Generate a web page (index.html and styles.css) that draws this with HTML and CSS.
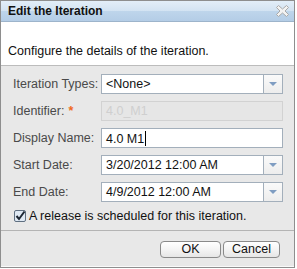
FILE: index.html
```html
<!DOCTYPE html>
<html lang="en">
<head>
  <meta charset="UTF-8">
  <title>Edit the Iteration</title>
  <link rel="stylesheet" href="styles.css">
</head>
<body>
<div class="dialog">
  <div class="titlebar">
    <span class="title">Edit the Iteration</span>
    <svg class="close" width="13" height="12" viewBox="0 0 13 12">
      <polygon points="0.5,2.5 2.5,0.5 6.5,4 10.5,0.5 12.5,2.5 9,6 12.5,9.5 10.5,11.5 6.5,8 2.5,11.5 0.5,9.5 4,6" fill="#f2f2f2" stroke="#a9a9a9" stroke-width="1"/>
    </svg>
  </div>

  <div class="intro">Configure the details of the iteration.</div>

  <div class="form">
    <label class="label">Iteration Types:</label>
    <div class="field combo">
      <span class="value">&lt;None&gt;</span>
      <span class="arrow"></span>
    </div>

    <label class="label">Identifier: <span class="req">*</span></label>
    <div class="field disabled">
      <span class="value">4.0_M1</span>
    </div>

    <label class="label">Display Name:</label>
    <div class="field">
      <span class="value">4.0 M1<span class="caret"></span></span>
    </div>

    <label class="label">Start Date:</label>
    <div class="field combo">
      <span class="value">3/20/2012 12:00 AM</span>
      <span class="arrow"></span>
    </div>

    <label class="label">End Date:</label>
    <div class="field combo">
      <span class="value">4/9/2012 12:00 AM</span>
      <span class="arrow"></span>
    </div>
  </div>

  <div class="check-row">
    <svg class="check" width="12" height="12" viewBox="0 0 12 12">
      <rect x="0.5" y="0.5" width="11" height="11" rx="1.5" fill="#dfe9f4" stroke="#5f6f80"/>
      <path d="M2.5 6 L5 9 L10.5 1.5" fill="none" stroke="#1b2633" stroke-width="2"/>
    </svg>
    <span>A release is scheduled for this iteration.</span>
  </div>

  <div class="footer">
    <button class="btn ok">OK</button>
    <button class="btn cancel">Cancel</button>
  </div>
</div>
</body>
</html>
```

FILE: styles.css
```css
* {
  margin: 0;
  padding: 0;
  box-sizing: border-box;
}

body {
  font-family: "Liberation Sans", Arial, sans-serif;
  font-size: 12px;
  color: #111;
  background: #fff;
}

.dialog {
  width: 295px;
  height: 268px;
  border: 1px solid #8e8e8e;
  background: #e8e8e8;
  display: flex;
  flex-direction: column;
}

.titlebar {
  height: 21px;
  display: flex;
  align-items: center;
  justify-content: space-between;
  padding: 0 5px 0 7px;
  background: linear-gradient(#e3eef8, #d3e3f2 50%, #bed5eb 52%, #b4cde6);
  border-bottom: 1px solid #9db4cb;
}

.title {
  font-weight: bold;
  font-size: 12px;
  color: #111;
}

.close {
  display: block;
}

.intro {
  height: 44px;
  background: #fff;
  border-bottom: 1px solid #bcbcbc;
  display: flex;
  align-items: flex-end;
  padding: 0 0 7px 7px;
  font-size: 12.5px;
}

.form {
  display: grid;
  grid-template-columns: 88px 182px;
  row-gap: 7px;
  padding: 8px 0 0 12px;
}

.label {
  display: flex;
  align-items: center;
  white-space: nowrap;
  color: #4a4a4a;
  font-size: 12.5px;
}

.req {
  color: #f06a1c;
  font-weight: bold;
  margin-left: 4px;
}

.field {
  height: 20px;
  display: flex;
  align-items: center;
  background: #fff;
  border: 1px solid #a3afbb;
  font-size: 12.5px;
}

.value {
  flex: 1;
  padding-left: 4px;
  white-space: nowrap;
}

.field.disabled {
  background: #e6e6e6;
  border-color: #d2d2d2;
  color: #cfcfcf;
}

.caret {
  display: inline-block;
  width: 1px;
  height: 15px;
  background: #000;
  vertical-align: -3px;
  margin-left: 1px;
}

.arrow {
  width: 19px;
  height: 100%;
  border-left: 1px solid #a3afbb;
  background: linear-gradient(#fafafa, #ededed);
  display: flex;
  align-items: center;
  justify-content: center;
}

.arrow::after {
  content: "";
  border-left: 4px solid transparent;
  border-right: 4px solid transparent;
  border-top: 4px solid #7f9dc2;
}

.check-row {
  display: flex;
  align-items: center;
  gap: 3px;
  padding: 5px 0 0 13px;
  height: 23px;
  font-size: 12.5px;
}

.check {
  display: block;
}

.footer {
  margin-top: auto;
  height: 37px;
  border-top: 1px solid #b4b4b4;
  border-bottom: 1px solid #fafafa;
  display: flex;
  justify-content: flex-end;
  align-items: flex-start;
  gap: 2px;
  padding: 10px 14px 0 0;
}

.btn {
  height: 17px;
  font-family: "Liberation Sans", Arial, sans-serif;
  font-size: 12.5px;
  color: #111;
  border: 1px solid #8a8a8a;
  border-radius: 4px;
  background: linear-gradient(#ffffff, #f4f4f4 50%, #e6e6e6);
  padding: 0;
  line-height: 15px;
}

.btn.ok {
  width: 61px;
}

.btn.cancel {
  width: 57px;
}
```
